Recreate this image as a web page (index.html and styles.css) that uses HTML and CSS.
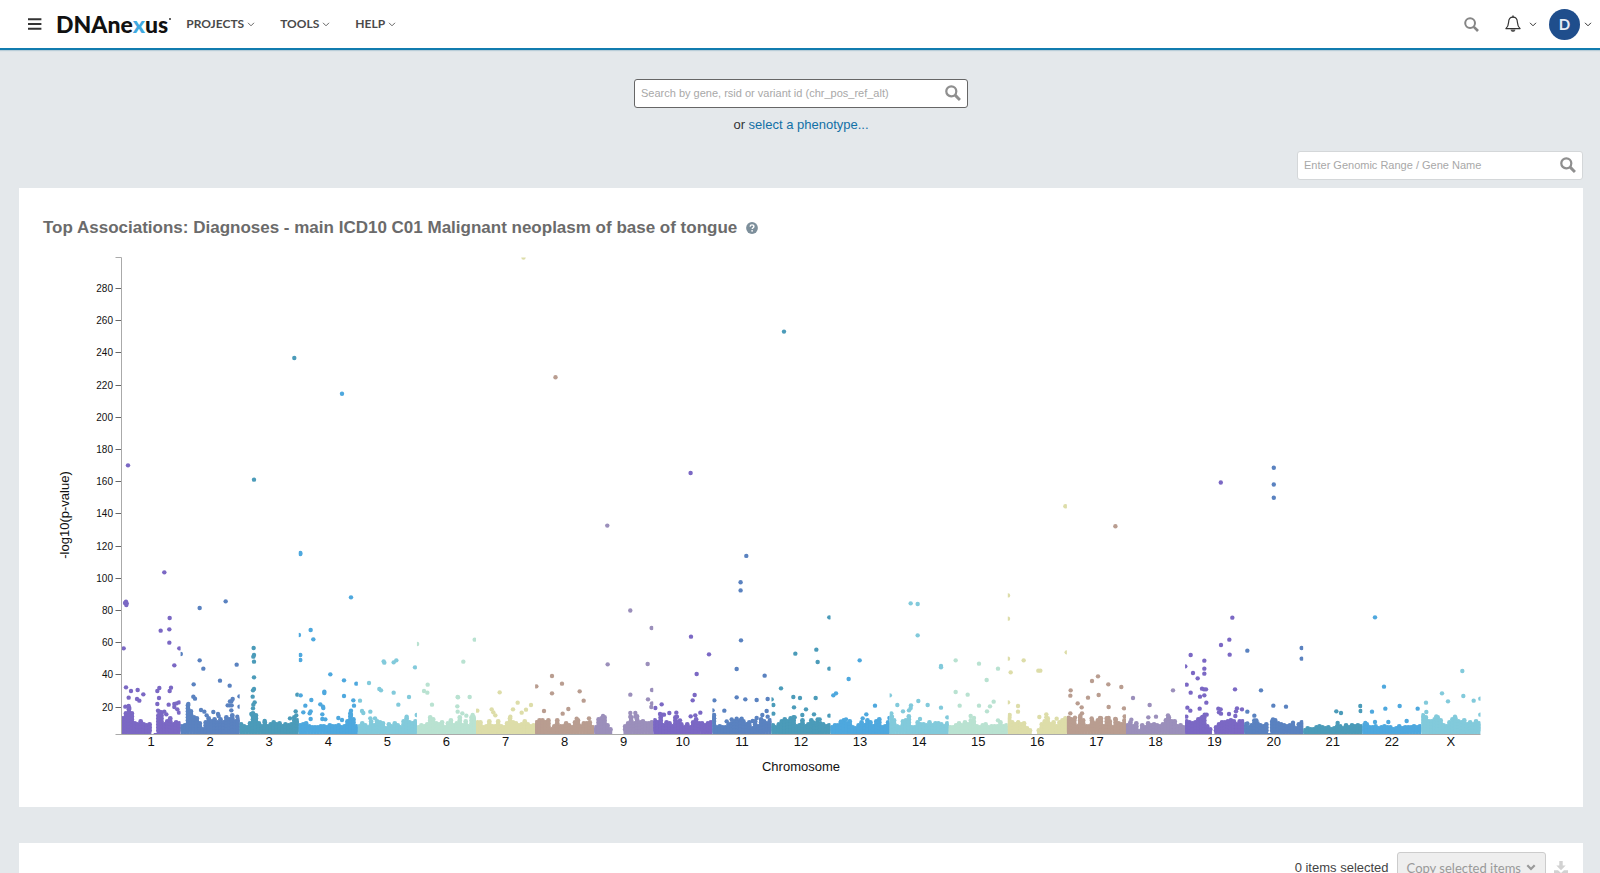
FILE: index.html
```html
<!DOCTYPE html>
<html lang="en">
<head>
<meta charset="utf-8">
<title>Top Associations</title>
<link rel="stylesheet" href="styles.css">
</head>
<body>
<div class="app">
  <header class="topbar">
    <button class="icon-button" type="button" aria-label="Menu">
      <svg width="14" height="12" viewBox="0 0 14 12"><path d="M0 1.2h13.4M0 6h13.4M0 10.8h13.4" stroke="#333" stroke-width="1.900"/></svg>
    </button>
    <a class="logo" href="#">DNAne<span class="logo-x">x</span>us<span class="logo-dot"></span></a>
    <nav class="nav">
      <button class="nav-item" type="button">PROJECTS <svg class="chevron" viewBox="0 0 8 5"><path d="M1 .8l3 3 3-3"/></svg></button>
      <button class="nav-item" type="button">TOOLS <svg class="chevron" viewBox="0 0 8 5"><path d="M1 .8l3 3 3-3"/></svg></button>
      <button class="nav-item" type="button">HELP <svg class="chevron" viewBox="0 0 8 5"><path d="M1 .8l3 3 3-3"/></svg></button>
    </nav>
    <div class="tools">
      <button class="icon-button" type="button" aria-label="Search">
        <svg width="15" height="15" viewBox="0 0 15 15" fill="none" stroke="#858585"><circle cx="6.1" cy="6.1" r="4.9" stroke-width="2"/><path d="M9.8 9.8l4.2 4.2" stroke-width="2.600"/></svg>
      </button>
      <button class="icon-button bell" type="button" aria-label="Notifications">
        <svg width="16" height="18" viewBox="0 0 16 18"><path d="M8 2.2C4.9 2.2 3.7 4.5 3.6 7.2 3.5 10 2.8 11.7.9 13.6h14.2c-1.9-1.9-2.6-3.6-2.7-6.4C12.3 4.500 11.100 2.200 8 2.200z" fill="none" stroke="#333" stroke-width="1.2" stroke-linejoin="round"/><path d="M8 .4v2" stroke="#333" stroke-width="1.400"/><path d="M5.500 14.600h5a2.500 2.300 0 0 1-5 0z" fill="#555"/></svg>
        <svg class="chevron dark" viewBox="0 0 8 5"><path d="M1 .8l3 3 3-3"/></svg>
      </button>
      <button class="icon-button account" type="button" aria-label="Account">
        <span class="avatar">D</span>
        <svg class="chevron dark" viewBox="0 0 8 5"><path d="M1 .8l3 3 3-3"/></svg>
      </button>
    </div>
  </header>

  <main class="content">
    <section class="lookup">
      <div class="field field-main">
        <input type="text" aria-label="Search by gene, rsid or variant id" placeholder="Search by gene, rsid or variant id (chr_pos_ref_alt)">
        <svg width="16" height="16" viewBox="0 0 15 15" fill="none" stroke="#8f8f8f"><circle cx="5.900" cy="5.900" r="4.700" stroke-width="2.100"/><path d="M9.500 9.500l4.500 4.500" stroke-width="2.700"/></svg>
      </div>
      <p class="alt">or <a href="#">select a phenotype...</a></p>
    </section>
    <div class="range-row">
      <div class="field field-range">
        <input type="text" aria-label="Enter Genomic Range or Gene Name" placeholder="Enter Genomic Range / Gene Name">
        <svg width="16" height="16" viewBox="0 0 15 15" fill="none" stroke="#8f8f8f"><circle cx="5.900" cy="5.900" r="4.700" stroke-width="2.100"/><path d="M9.500 9.500l4.500 4.500" stroke-width="2.700"/></svg>
      </div>
    </div>

    <section class="card chart-card">
      <h1 class="title">Top Associations: Diagnoses - main ICD10 C01 Malignant neoplasm of base of tongue
        <svg class="help" width="12" height="12" viewBox="0 0 12 12"><circle cx="6" cy="6" r="5.900" fill="#7d8f9b"/><path d="M4.100 4.600c.1-1.200.9-1.700 1.900-1.700s1.900.6 1.900 1.600c0 1.300-1.600 1.200-1.700 2.500" fill="none" stroke="#fff" stroke-width="1.400"/><circle cx="6.100" cy="8.800" r=".9" fill="#fff"/></svg>
      </h1>
      <svg class="plot" id="plot" viewBox="43 250 1516 530" role="img" aria-label="Manhattan plot of p-values by chromosome"></svg>
    </section>

    <section class="card results">
      <span>0 items selected</span>
      <button class="copy" type="button" disabled>Copy selected items <svg width="10" height="7" viewBox="0 0 10 7"><path d="M1.300 1.300L5 5l3.700-3.700" fill="none" stroke="#999" stroke-width="2.200"/></svg></button>
      <button class="icon-button" type="button" aria-label="Download" disabled>
        <svg width="14" height="14" viewBox="0 0 14 14" fill="#d2d2d2"><path d="M5.300 0h3.400v4.500h3L7 9.300 2.300 4.500h3z"/><path d="M0 9.300h4l3 2.600 3-2.600h4V13.300H0z"/></svg>
      </button>
    </section>
  </main>
</div>
<script src="plot.js"></script>
</body>
</html>
```

FILE: styles.css
```css
* { box-sizing: border-box; }

body {
  margin: 0;
  background: #e4e8eb;
  color: #333;
  font-family: "Liberation Sans", Arial, sans-serif;
  font-size: 13px;
}

button, input { font: inherit; }
a { color: #1270a6; text-decoration: none; }
svg { display: block; flex: none; }

.app {
  height: 100vh;
  overflow: hidden;
}

.topbar {
  display: flex;
  align-items: center;
  height: 50px;
  padding: 0 8px 0 28px;
  background: #fff;
  border-bottom: 2px solid #117caf;
  box-shadow: 0 1px 1px #b9cdd8;
}

.icon-button {
  display: flex;
  align-items: center;
  padding: 0;
  border: 0;
  background: none;
}

.logo {
  display: flex;
  margin-left: 14px;
  color: #111;
  font: 900 23px/28px Lato, sans-serif;
}

.logo-x { color: #3fa9e0; }

.logo-dot {
  width: 2px;
  height: 2px;
  margin: 8px 0 0 1px;
  border-radius: 50%;
  background: #333;
}

.nav {
  display: flex;
  gap: 25px;
  margin-left: 15px;
}

.nav-item {
  display: flex;
  align-items: center;
  gap: 3px;
  padding: 0;
  border: 0;
  background: none;
  color: #4a4a4a;
  font: 700 12px/20px Lato, sans-serif;
}

.chevron {
  width: 8px;
  height: 5px;
  fill: none;
  stroke: #666;
  stroke-width: 1;
}

.chevron.dark { stroke: #333; }

.tools {
  display: flex;
  align-items: center;
  margin-left: auto;
}

.bell {
  gap: 8px;
  margin: 0 12px 0 26px;
}

.account { gap: 4px; }

.avatar {
  width: 31px;
  height: 31px;
  border-radius: 50%;
  background: #1f4e8c;
  color: #e6edf5;
  font: 700 15px/31px Lato, sans-serif;
  text-align: center;
}

.content { padding: 29px 17px 0 19px; }

.lookup {
  display: flex;
  flex-direction: column;
  align-items: center;
}

.field {
  display: flex;
  align-items: center;
  height: 29px;
  padding: 0 6px 2px;
  border: 1px solid #d4d7d9;
  border-radius: 3px;
  background: #fff;
}

.field input {
  flex: 1;
  min-width: 0;
  padding: 0;
  border: 0;
  outline: 0;
  background: none;
  color: #333;
  font-size: 11px;
}

.field input::placeholder { color: #a8a8a8; }
.field-main { width: 334px; border-color: #666; }
.field-range { width: 286px; }

.alt {
  margin: 8px 0 0;
  line-height: 18px;
}

.range-row {
  display: flex;
  justify-content: flex-end;
  padding: 17px 0 8px;
}

.card { background: #fff; }

.chart-card { padding: 28px 24px 27px; }

.title {
  display: flex;
  align-items: center;
  gap: 9px;
  margin: 0;
  color: #6b6b6b;
  font-size: 17px;
  line-height: 24px;
}

.plot {
  width: 100%;
  height: auto;
  margin-top: 10px;
  fill: #111;
  font-size: 13px;
}

.plot .axis {
  fill: none;
  stroke: #aaa;
}

.plot .tick { stroke: #666; }
.plot .tick-label { font-size: 10px; text-anchor: end; }
.plot .label { text-anchor: middle; }

.results {
  display: flex;
  align-items: center;
  justify-content: flex-end;
  gap: 8px;
  margin-top: 36px;
  padding: 9px 15px;
  color: #444;
}

.copy {
  display: flex;
  align-items: center;
  gap: 5px;
  height: 31px;
  padding: 0 9px;
  border: 1px solid #ccc;
  border-radius: 3px;
  background: #eee;
  color: #999;
  font: 13px/20px Lato, sans-serif;
}
```

FILE: plot.js
```js
const plot = document.getElementById("plot");
const colors = ["#7b68c4", "#5a82c0", "#4b9bb9", "#4ea8de", "#82cadb", "#b9e2d1", "#dddda9", "#b99d90", "#9b8fbb"];
const left = 121.5, right = 1480.5, top0 = 257.5, base = 734;
const dot = 2.2;
const names = Array.from({ length: 22 }, (_, i) => String(i + 1)).concat("X");
const band = (right - left) / names.length;

// Height of the dense low-significance layer, 20 bins per chromosome
const floors = [
  [17,22,26,22,12,11,14,11,10,11,0,2,20,23,11,14,17,11,13,12],
  [9,10,30,24,18,17,12,6,13,17,14,16,13,16,13,18,16,20,14,16],
  [11,9,8,12,22,20,12,9,13,9,11,13,11,12,9,11,10,11,18,15],
  [10,11,12,9,8,8,8,9,9,8,10,9,9,10,8,9,14,22,16,9],
  [9,12,10,8,14,10,14,13,12,7,11,9,12,10,8,14,17,13,12,14],
  [8,10,9,11,18,16,12,11,13,8,12,15,10,12,18,10,14,9,18,16],
  [13,13,8,9,14,9,9,14,9,8,12,17,13,12,10,11,14,11,9,10],
  [13,15,15,13,15,6,9,15,9,9,12,10,8,13,15,9,12,12,13,8],
  [8,16,17,18,10,6,0,0,0,0,9,12,18,12,19,13,14,12,12,13],
  [15,13,18,10,13,12,9,18,13,11,8,11,8,13,16,12,12,10,12,13],
  [20,8,9,8,8,11,12,14,14,15,14,11,13,7,14,9,16,14,12,15],
  [10,8,11,14,16,14,17,18,9,10,15,9,11,15,10,13,12,11,9,10],
  [8,10,10,13,15,12,14,8,7,10,13,10,15,13,9,14,16,8,9,13],
  [19,15,9,8,14,15,19,8,8,13,11,11,10,13,10,12,12,11,9,12],
  [8,8,10,12,10,13,11,15,14,9,8,10,11,8,9,9,9,13,9,10],
  [18,13,11,13,11,12,7,5,0,0,5,11,14,17,11,13,9,13,15,17],
  [17,16,15,9,18,15,9,9,15,12,15,17,9,17,14,8,16,12,11,15],
  [10,13,9,12,4,10,8,12,10,11,10,9,11,15,18,14,14,9,10,8],
  [14,13,12,13,16,17,18,9,6,0,8,11,13,13,14,15,14,11,14,14],
  [11,8,10,13,12,10,9,11,2,14,15,12,11,10,9,10,10,7,11,13],
  [5,7,6,6,8,9,8,7,8,6,7,9,9,7,10,8,10,9,10,9],
  [10,11,8,8,9,7,8,9,8,8,6,7,9,7,8,8,8,9,8,9],
  [20,18,14,14,16,18,15,10,9,13,16,17,14,13,15,11,13,11,14,12]
];

// Associations, as "x,y" offsets from each tile's origin; unit is the tile's step
const tiles = [
  { x: 0, y: 0, step: 1, points: "523.5,257.5 784,331.6 294.3,358 342,393.7 555.5,377.2 690.6,473 607.3,525.6 1065.4,506.2 1115.4,526.2 1220.8,482.5 1273.8,467.7 1273.8,484.5 1273.8,497.8 746.3,555.9 740.6,582.3 740.6,590.4 630.3,610.5 1009,595.4" },
  { x: 40, y: 440, step: 1 / 3, points: "264,76 642,119 781,339 781,342 373,397 933,472 258,485 255,489 260,490 259,495 557,484 479,504 389,534 362,572 388,568 812,570 779,585 820,598 388,608 251,625 418,625 424,642 479,661 490,686 590,674 403,676 641,624 642,645 640,650 642,665 781,645 781,660 1133,612 1031,664 1033,668 1061,667 1069,661 1125,682" },
  { x: 40, y: 640, step: 1 / 3, points: "258,142 273,153 293,150 310,163 266,173 291,177 298,182 256,200 266,198 268,204 352,153 358,144 393,143 389,153 357,174 352,192 386,194 403,192 403,201 417,187 410,190 412,208 417,218 373,215 354,212 358,215 379,223 461,133 460,170 465,176 445,192 483,210 493,215 500,226 520,216 534,222 536,228 540,122 569,137 597,169 597,200 578,177 570,184 563,196 569,196 575,196 574,184 574,211 592,230 642,112 642,147 639,151 638,170 644,187 640,194 639,205 634,222 642,232 674,243 772,164 767,214 769,226 750,235 782,166 814,180 796,197 790,217 812,214 809,220 812,237 853,155 853,159 841,193 849,200 850,204 847,223 847,237 856,238 871,103 912,121 912,168 940,181 942,197 933,212 933,225 895,234 906,240 949,131 960,182 987,129 966,213 970,219 991,215 991,235 1005,235 1018,147 1023,151 1061,158 1107,171 1075,194 1128,225 1100,230 1163,134 1152,153 1162,158 1176,194 1254,172" },
  { x: 440, y: 620, step: 1 / 3, points: "104,59 70,125 53,231 89,231 52,259 53,275 67,280 79,287 98,285 101,291 112,272 179,217 233,248 155,268 160,277 166,286 219,268 258,269 273,255 245,278 211,290 289,199 336,168 336,220 366,191 419,214 431,242 312,273 368,281 385,267 410,296 447,295 503,133 489,288 489,295 571,224 623,132 635,24 624,238 636,210 636,250 634,261 571,279 586,279 571,290 586,290 753,50 807,103 770,162 764,225 758,241 665,253 646,264 660,282 666,284 672,284 688,279 709,278 711,290 752,289 766,286 781,278 720,301 903,61 890,147 974,167 890,232 916,238 950,240 983,237 823,241 820,271 853,272 822,285 822,295 822,302 980,273 967,285 983,290 950,294 938,303 875,298 890,296 905,296 860,304 1000,255 997,238 1066,101 1129,89 1133,126 1168,146 1023,205 1060,231 1080,234 1127,234 1062,262 1098,268 1087,285 1122,283 1133,298 1139,298 1000,281 1168,287 1064,292 1120,307" },
  { x: 820, y: 600, step: 1 / 3, points: "28,52 119,181 86,237 40,286 48,280 165,317 139,343 128,355 78,358 63,364 206,354 272,10 293,12 293,106 363,198 363,202 211,286 295,303 323,315 232,315 273,316 272,324 267,331 249,334 363,323 214,340 216,350 382,352 300,357 407,181 477,191 534,206 500,240 407,276 443,284 419,317 477,317 521,305 510,319 501,334 452,348 462,354 534,361 567,56 567,176 611,181 572,217 567,307 655,212 661,212 738,157 594,318 594,335 569,345 679,343 679,352 658,351 710,356 834,229 816,243 865,253 904,261 752,271 751,287 836,285 804,293 773,310 785,322 866,321 912,325 751,340 786,340 781,347 746,353 765,353 914,349 866,354 886,357 840,354 815,355 1059,271 939,294 989,315 985,352 1008,350 1044,346 1044,355 934,359" },
  { x: 1160, y: 600, step: 1 / 3, points: "217,53 208,119 183,135 209,164 92,165 133,182 133,206 133,221 77,199 99,219 113,235 80,254 92,278 126,266 132,268 138,268 133,286 120,290 225,268 139,308 82,323 91,332 119,326 127,351 134,344 140,344 79,350 175,326 182,328 177,337 183,341 207,342 231,325 246,328 228,334 226,348 262,152 303,271 425,144 425,176 340,317 378,320 262,335 283,347 283,361 289,361 262,370 339,358 399,368 529,334 543,339 601,318 602,333 533,369 645,52 672,260 676,326 719,318 636,335 773,326 616,369 645,366 685,366 740,363 907,213 846,280 864,304 910,288 941,302 960,296 798,308 799,336 958,344 790,348 829,349 885,350" }
];

const groups = names.map(() => []);
floors.forEach((bins, c) => {
  const w = band / bins.length;
  bins.forEach((h, i) => {
    if (h < 1) return;
    const x = left + c * band + i * w;
    // Solid up to just under the bin's height, with rounded points on top
    const body = Math.max(h - 1.5, 1);
    groups[c].push(`<rect x="${x - 0.3}" y="${base - body}" width="${w + 0.6}" height="${body}"/>`);
    for (let y = h - 1.5; y > 2; y -= 3) {
      groups[c].push(`<circle cx="${x + w / 2}" cy="${base - y}" r="2.4"/>`);
    }
  });
});
tiles.forEach(({ x, y, step, points }) => {
  points.split(" ").forEach(pair => {
    const [px, py] = pair.split(",").map(Number);
    let cx = x + px * step;
    const c = Math.min(names.length - 1, Math.max(0, Math.floor((cx - left) / band)));
    const start = left + c * band;
    // Points at a chromosome's end sit on its border and are cut by the clip
    if (cx - start < 1.2) cx = start + 0.2;
    if (start + band - cx < 1.2) cx = start + band - 0.2;
    groups[c].push(`<circle cx="${cx}" cy="${y + py * step}" r="${dot}"/>`);
  });
});

let svg = "";
names.forEach((name, c) => {
  const x = left + c * band;
  svg += `<clipPath id="band${c}"><rect x="${x}" y="${top0}" width="${band}" height="${base - top0}"/></clipPath>`;
  svg += `<g clip-path="url(#band${c})" fill="${colors[c % colors.length]}">${groups[c].join("")}</g>`;
  svg += `<text class="label" x="${x + band / 2}" y="746">${name}</text>`;
});
svg += `<path class="axis" d="M115.500 257.500H121.500V734.500M115.500 734.500H${right}"/>`;
for (let v = 20; v <= 280; v += 20) {
  const y = Math.round(707.5 - (v - 20) * 1.6096);
  svg += `<path class="tick" d="M115.500 ${y - 0.5}H121"/><text class="tick-label" x="113" y="${y + 3}">${v}</text>`;
}
svg += `<text class="label" x="801" y="771">Chromosome</text>`;
svg += `<text class="label" transform="translate(69 515) rotate(-90)">-log10(p-value)</text>`;
plot.innerHTML = svg;
```
